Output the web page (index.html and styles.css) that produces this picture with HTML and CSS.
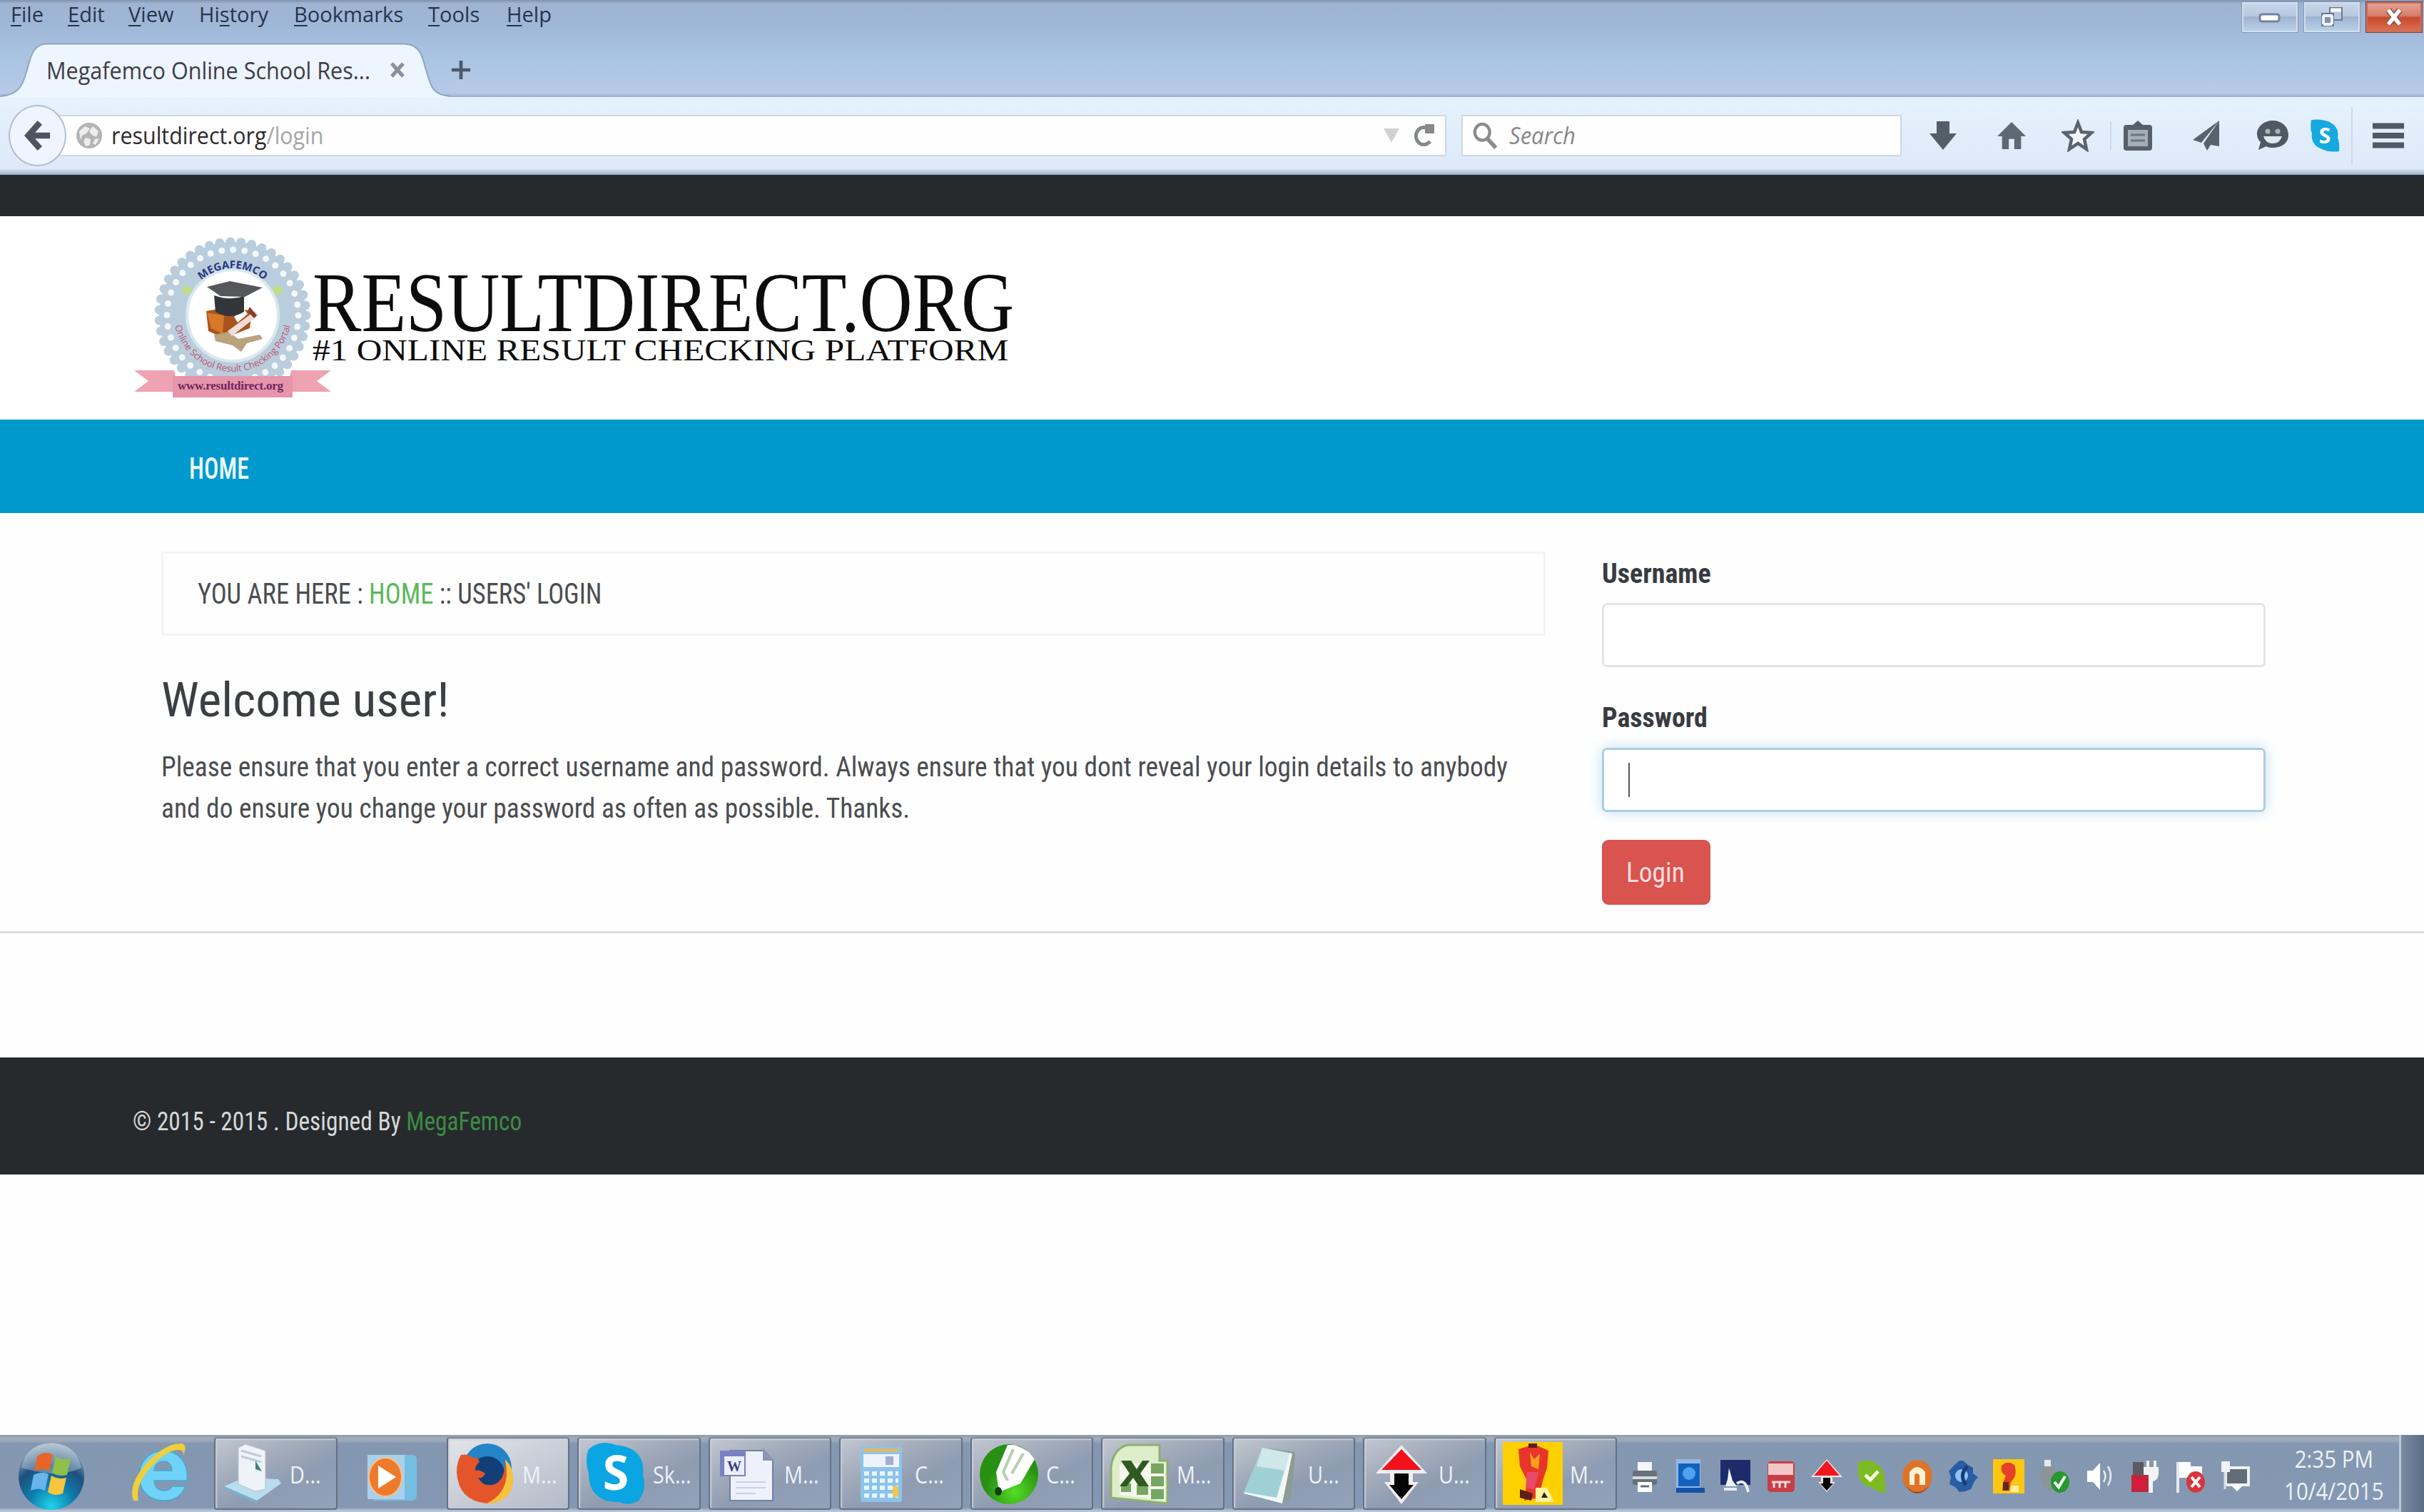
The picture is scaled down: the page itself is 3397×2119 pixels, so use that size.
FILE: index.html
```
<!DOCTYPE html>
<html lang="en">
<head>
<meta charset="utf-8">
<title>Megafemco Online School Result</title>
<link rel="stylesheet" href="styles.css">
</head>
<body>
<header class="titlebar">
  <div class="menu-row">
    <nav class="menu">
      <span><u>F</u>ile</span><span><u>E</u>dit</span><span><u>V</u>iew</span><span>Hi<u>s</u>tory</span><span><u>B</u>ookmarks</span><span><u>T</u>ools</span><span><u>H</u>elp</span>
    </nav>
    <div class="win-controls">
      <button class="win"><svg width="32" height="18" viewBox="0 0 32 18"><rect x="2" y="5" width="27" height="10" rx="3" fill="#fff" stroke="#76829a" stroke-width="3"/></svg></button>
      <button class="win"><svg width="36" height="32" viewBox="0 0 36 32"><rect x="15" y="3" width="17" height="17" fill="#b4c5de" stroke="#6b7890" stroke-width="2"/><path d="M16 6h15" stroke="#fff" stroke-width="5"/><rect x="4" y="11" width="16" height="17" fill="#8393ad" stroke="#6b7890" stroke-width="2"/><path d="M5 14h14M6 14v12M18 14v12M6 26h12" stroke="#eef4fb" stroke-width="4"/></svg></button>
      <button class="win close"><svg width="30" height="28" viewBox="0 0 30 28"><path d="M7 4l16 20M23 4L7 24" stroke="#8b5656" stroke-width="9"/><path d="M7 4l16 20M23 4L7 24" stroke="#fff" stroke-width="5.5"/></svg></button>
    </div>
  </div>
  <div class="tab-row">
    <div class="tab">
      <svg class="tab-shape" viewBox="0 0 632 76"><path d="M0 76V75C28 73 32 58 38 38C44 12 50 2 66 2H566C588 2 592 18 597 38C604 62 606 73 632 75V76Z" fill="#edf5fe"/><path d="M0 75C28 73 32 58 38 38C44 12 50 1.500 66 1.500H566C588 1.500 592 18 597 38C604 62 606 73 632 75" fill="none" stroke="#8fa5c2" stroke-width="2"/></svg>
      <span class="tab-title">Megafemco Online School Res...</span>
      <svg class="tab-close" width="24" height="24" viewBox="0 0 24 24"><path d="M4 3l16 18M20 3L4 21" stroke="#8b9099" stroke-width="5"/></svg>
    </div>
    <svg class="new-tab" width="28" height="30" viewBox="0 0 30 30"><path d="M15 1v28M1 15h28" stroke="#4c586b" stroke-width="5"/></svg>
  </div>
</header>

<div class="toolbar">
  <div class="back"><svg width="38" height="44" viewBox="0 0 40 46"><path d="M23 4L6 23l17 19M8 23h30" fill="none" stroke="#4d545e" stroke-width="9"/></svg></div>
  <div class="urlbar">
    <svg class="globe" width="38" height="38" viewBox="0 0 38 38"><circle cx="19" cy="19" r="18" fill="#b4b4b3"/><path d="M5 13l8-7 7 3-5 7-6 3-2 6zM24 6l8 7-3 8-6-3-4-5zM14 22l7 2-1 8-6 2-3-7zM27 24l6-1-5 9-4-2z" fill="#eee"/></svg>
    <span class="url"><b>resultdirect.org</b>/login</span>
    <svg class="drop" width="24" height="22" viewBox="0 0 24 22"><path d="M1 1h22L12 21z" fill="#cfd2d3"/></svg>
    <svg class="reload" width="34" height="34" viewBox="0 0 34 34"><path d="M25 9A11 12 0 1 0 26 25" fill="none" stroke="#85898d" stroke-width="5"/><path d="M19 14V1h13v13z" fill="#85898d"/></svg>
  </div>
  <div class="searchbar">
    <svg width="38" height="38" viewBox="0 0 38 40"><ellipse cx="15" cy="15" rx="11" ry="12" fill="none" stroke="#8b8b8b" stroke-width="4.500"/><path d="M22 24l13 14" stroke="#8b8b8b" stroke-width="6"/></svg>
    <span class="search-text">Search</span>
  </div>
  <div class="tools">
    <svg width="38" height="40" viewBox="0 0 38 40"><path d="M10 0h18v17h10L19 40 0 17h10z" fill="#555e68"/></svg>
    <svg width="40" height="40" viewBox="0 0 42 40"><path d="M21 0l21 21h-7v19H25V25h-8v15H7V21H0z" fill="#5e6872"/></svg>
    <svg width="46" height="46" viewBox="0 0 46 46"><path d="M23 5l5 13 14 1-10 9 3 14-12-8-12 8 3-14L4 19l14-1z" fill="#f2f7fd" stroke="#59636d" stroke-width="4.500"/></svg>
    <i class="sep"></i>
    <svg width="40" height="42" viewBox="0 0 40 42"><path d="M13 6l7-6 7 6h9q4 0 4 4v28q0 4-4 4H4q-4 0-4-4V10q0-4 4-4z" fill="#56606a"/><path d="M6 13h28v23H6z" fill="#a5adb5"/><path d="M10 20h20M10 28h20" stroke="#6c7680" stroke-width="3"/></svg>
    <svg width="38" height="42" viewBox="0 0 38 42"><path d="M37 0L0 27l12 4zM37 0L15 32l5 10 5-8 12 2z" fill="#57626c"/></svg>
    <svg width="44" height="42" viewBox="0 0 44 42"><path d="M22 0C34 0 44 8 44 20S34 38 22 38q-6 0-9-2L2 41l3-11Q0 26 0 19C0 8 10 0 22 0z" fill="#505962"/><circle cx="15" cy="15" r="3.500" fill="#aab2ba"/><circle cx="29" cy="15" r="3.500" fill="#aab2ba"/><path d="M9 22h26q-3 10-13 10T9 22z" fill="#dfe8ee"/></svg>
    <svg width="44" height="46" viewBox="0 0 44 46"><path d="M3 1q14-2 26 3 14 8 11 22 3 6 2 19-14 2-24-3Q2 36 4 20 1 14 3 1z" fill="#16a9e0"/><text x="22" y="34" text-anchor="middle" class="icon-s">S</text></svg>
    <i class="sep tall"></i>
    <svg width="44" height="36" viewBox="0 0 44 36"><path d="M0 4.500h44M0 18h44M0 31.500h44" stroke="#4d5965" stroke-width="8"/></svg>
  </div>
</div>

<div class="topbar"></div>
<div class="brand">
  <svg class="badge" width="280" height="232" viewBox="0 0 280 232">
    <defs>
      <path id="arc-top" d="M74 116A66 66 0 0 1 206 116"/>
      <path id="arc-low" d="M57 112A83 83 0 0 0 223 112"/>
    </defs>
    <circle cx="140" cy="116" r="103" fill="#b9cddd"/>
    <circle cx="140" cy="116" r="103" fill="none" stroke="#b9cddd" stroke-width="13" stroke-linecap="round" stroke-dasharray="0 15.05"/>
    <circle cx="140" cy="116" r="92" fill="none" stroke="#f2f8fc" stroke-width="9" stroke-linecap="round" stroke-dasharray="0 16.057"/>
    <circle cx="140" cy="116" r="64" fill="#fff" stroke="#d8e8ee" stroke-width="4"/>
    <text class="seal-top"><textPath href="#arc-top" startOffset="50%" text-anchor="middle">MEGAFEMCO</textPath></text>
    <text class="seal-low"><textPath href="#arc-low" startOffset="50%" text-anchor="middle">Online School Result Checking Portal</textPath></text>
    <circle cx="76" cy="81" r="6" fill="#bfe07d"/><circle cx="203" cy="81" r="6" fill="#bfe07d"/>
    <path d="M103 110l34-6 30 6-3 24-36 14-22-10z" fill="#a9541d"/>
    <path d="M104 112l24 4-2 26-16-8z" fill="#d8792a"/>
    <path d="M114 143l20-4 14 10 30-6 4 6-22 6-8 12-12-9-24-6z" fill="#b9a27c"/>
    <path d="M133 138l38-28 6 5-38 30z" fill="#f1dcd8"/><path d="M142 118l14-11 5 7-14 12z" fill="#fff"/><path d="M164 104l10 12-4 4-9-10z" fill="#82402a"/>
    <path d="M114 88q22 8 42 1v22q-20 12-40 0z" fill="#333639"/>
    <path d="M104 76l32-8 46 9-25 13-34-1z" fill="#55575b"/>
    <path d="M2 193h56v30H2l20-15zM278 193h-56v30h56l-20-15z" fill="#eea2b2"/>
    <path d="M58 193v8h-2v22l6 0z" fill="#d97990"/><path d="M222 193v8h2v22l-6 0z" fill="#d97990"/>
    <path d="M56 201h168v30H56z" fill="#e795ab"/>
    <text x="137" y="220" text-anchor="middle" textLength="148" class="ribbon">www.resultdirect.org</text>
  </svg>
  <div class="brand-text">
    <h1>RESULTDIRECT.ORG</h1>
    <p>#1 ONLINE RESULT CHECKING PLATFORM</p>
  </div>
</div>
<nav class="mainnav"><a>HOME</a></nav>

<main>
  <section class="intro">
    <div class="crumbs"><span>YOU ARE HERE : <a>HOME</a> :: USERS' LOGIN</span></div>
    <h2>Welcome user!</h2>
    <p>Please ensure that you enter a correct username and password. Always ensure that you dont reveal your login details to anybody<br>and do ensure you change your password as often as possible. Thanks.</p>
  </section>
  <form class="login">
    <label>Username</label>
    <div class="field"></div>
    <label>Password</label>
    <div class="field focus"><i></i></div>
    <button type="button"><span>Login</span></button>
  </form>
</main>
<footer><span>© 2015 - 2015 . Designed By <a>MegaFemco</a></span></footer>
<div class="blank"></div>

<div class="taskbar">
  <div class="orb"><svg width="94" height="96" viewBox="0 0 94 96" preserveAspectRatio="none">
    <defs><radialGradient id="orb" cx=".5" cy=".95" r=".95"><stop offset="0" stop-color="#22d3ee"/><stop offset=".35" stop-color="#0c7fae"/><stop offset=".65" stop-color="#1f4f7c"/><stop offset="1" stop-color="#a9bccc"/></radialGradient></defs>
    <ellipse cx="47" cy="48" rx="46" ry="47" fill="url(#orb)"/><path d="M5 36Q12 2 47 2t42 34Q68 46 47 44T5 36z" fill="#dbe6ee" opacity=".35"/>
    <path d="M27 20q12-9 22-2l-5 23q-9-6-21 0z" fill="#e8642a"/><path d="M53 20q10 6 21 3l-5 23q-12 3-21-3z" fill="#8ec04a"/><path d="M22 46q12-6 21-1l-5 23q-9-5-20 0z" fill="#69b4ea"/><path d="M47 47q10 6 21 3l-5 22q-11 5-21-2z" fill="#f9c440"/></svg></div>
  <div class="ie"><svg width="82" height="86" viewBox="0 0 82 86">
    <path d="M46 12C26 12 12 28 12 48S26 82 47 82q22 0 30-20H58q-3 6-10 6-14 0-15-14h46C82 28 66 12 46 12zM33 40q2-13 13-13t12 13z" fill="#6fd3f7" stroke="#45a6d4" stroke-width="1.500"/>
    <path d="M4 82Q-4 60 22 30 50 0 72 2q8 2 2 16 0-8-8-7Q48 12 26 38 6 62 11 82z" fill="#f0cf3a"/></svg></div>
  <div class="task"><svg width="84" height="84" viewBox="0 0 84 84"><path d="M2 60l28-12 48 2 4 6-34 24z" fill="#b9ddee"/><path d="M2 60l46 20v4L2 64z" fill="#7bb0cc"/><path d="M22 6l10-5 28 9v54l-14 3-24-10z" fill="#eef3f8" stroke="#b5c0cd"/><path d="M26 10l28 8M26 18l28 8" stroke="#c1cad6" stroke-width="3"/><path d="M46 24v12l9 3z" fill="#47817e"/></svg><span>D...</span></div>
  <div class="media"><svg width="72" height="68" viewBox="0 0 72 68"><path d="M10 2h55q6 0 6 6v50q0 8-8 8H10z" fill="#74bfe3"/><path d="M2 2h52v62H2z" fill="#a9d1e9"/><ellipse cx="27" cy="33" rx="23" ry="27" fill="#ee7a2c" stroke="#f8c08e" stroke-width="2"/><path d="M17 17v32l25-16z" fill="#fff"/></svg></div>
  <div class="task active"><svg width="84" height="88" viewBox="0 0 84 88"><circle cx="45" cy="36" r="34" fill="#2385c8"/><circle cx="45" cy="44" r="24" fill="#123f78"/><path d="M8 18q10-2 16 4 8-2 10 6-6 4-6 12 6-2 14 4-4 8-10 6 6 12 20 10 18-4 18-34 16 22 8 40Q70 86 44 86 4 82 2 42 2 28 8 18z" fill="#e5552a"/><path d="M70 24q16 16 9 42Q70 86 44 86 70 74 72 46q0-12-2-22z" fill="#f7c23c"/></svg><span>M...</span></div>
  <div class="task"><svg width="84" height="88" viewBox="0 0 84 88"><path d="M4 10Q20-4 42 4 84 8 80 46q6 20-6 36-14 8-28 2Q4 84 4 44-2 24 4 10z" fill="#0aa5e2"/><text x="42" y="67" text-anchor="middle" class="icon-s large">S</text></svg><span>Sk...</span></div>
  <div class="task"><svg width="84" height="88" viewBox="0 0 84 88"><path d="M18 12h48l12 14v56H18z" fill="#eef1fb" stroke="#7080a8" stroke-width="2"/><path d="M64 8v18h16z" fill="#8b95b5"/><path d="M26 56h42M26 64h42M26 72h28" stroke="#c7cfe6" stroke-width="2"/><rect x="4" y="12" width="36" height="36" fill="#7a80c4"/><rect x="10" y="20" width="28" height="26" fill="#eceffa"/><text x="24" y="41" text-anchor="middle" class="app-w">W</text></svg><span>M...</span></div>
  <div class="task"><svg width="84" height="88" viewBox="0 0 84 88"><rect x="18" y="6" width="58" height="78" rx="3" fill="#8dc3ea"/><path d="M22 9h50v5H22z" fill="#e3b766"/><path d="M22 17h50v18H22z" fill="#edf2fc"/><path d="M53 20h11v12H53z" fill="#a4acd5"/><g stroke="#e7f5fc" stroke-width="6" stroke-dasharray="7 4"><path d="M23 44h48M23 54h48M23 64h48M23 75h48"/></g><rect x="63" y="62" width="8" height="15" fill="#f0c84c"/></svg><span>C...</span></div>
  <div class="task"><svg width="84" height="88" viewBox="0 0 84 88"><defs><radialGradient id="cg" cx=".6" cy=".8"><stop offset="0" stop-color="#56dd25"/><stop offset="1" stop-color="#279012"/></radialGradient></defs><ellipse cx="42" cy="45" rx="41" ry="42" fill="url(#cg)"/><path d="M24 42L40 4h10l10 4 10 6 8 10-20 34-30 12z" fill="#fff"/><path d="M48 10L34 42l6 12M62 16L46 44" stroke="#b7cfad" stroke-width="4" fill="none"/><ellipse cx="27" cy="69" rx="5" ry="6" fill="#123f0e"/></svg><span>C...</span></div>
  <div class="task"><svg width="84" height="88" viewBox="0 0 84 88"><path d="M2 78V34Q6 8 26 4h44v22h11v60z" fill="#dcedc8" stroke="#8fae70" stroke-width="3"/><path d="M14 30h64v52L14 74z" fill="#f4f9ec"/><path d="M58 30h18v14H58zM58 48h18v14H58zM58 66h18v14H58zM38 60h16v14H38zM16 58h14v12H16z" fill="#77a662"/><path d="M16 26h14l8 12 8-12h10L43 44l12 18H41l-8-12-9 12H14l14-18z" fill="#2f5b22"/></svg><span>M...</span></div>
  <div class="task"><svg width="84" height="88" viewBox="0 0 84 88"><path d="M32 8l44 6-6 66-14 6z" fill="#8d9b94"/><path d="M30 8l42 8-14 70L4 72z" fill="#f1f8f7"/><path d="M30 8l38 8-18 62L4 70z" fill="#9fd0d6"/><path d="M30 8l38 8-6 24-40-6z" fill="#cfe7ea"/></svg><span>U...</span></div>
  <div class="task"><svg width="84" height="88" viewBox="0 0 84 88"><path d="M42 4l36 40H58v12h8L42 87 18 56h8V44H6z" fill="#f1edf0"/><path d="M42 10l28 29H14z" fill="#f3111b"/><path d="M32 44h20v16h7L42 80 25 60h7z" fill="#050505"/></svg><span>U...</span></div>
  <div class="task"><svg width="84" height="88" viewBox="0 0 84 88"><rect width="84" height="88" fill="#fdd000"/><path d="M22 10l16-5 10 0 16 7-2 24-6 18-6 24-20 4 4-28-10-20z" fill="#e8352c"/><path d="M38 14l6 10 8-8-2 22-10-4z" fill="#fba01b"/><path d="M34 42l16 0-6 24-12-2z" fill="#e84b6a"/><path d="M36 2h12v6H36zM24 66l18 6-2 10-16-4z" fill="#5b1f16"/><path d="M46 64h16l10 20H46z" fill="#fff2a0"/><path d="M54 78l4-8 5 8z" fill="#222"/></svg><span>M...</span></div>
  <div class="tray">
    <svg viewBox="0 0 44 48"><rect x="12" y="4" width="20" height="16" fill="#f4f6f8"/><rect x="5" y="16" width="34" height="20" rx="3" fill="#69707a"/><path d="M5 26h34" stroke="#d6dade" stroke-width="4"/><rect x="12" y="32" width="20" height="14" fill="#fff"/><path d="M16 38h12" stroke="#66707a" stroke-width="3"/></svg>
    <svg viewBox="0 0 44 48"><path d="M2 0h34v42H2z" fill="#94b8e4"/><path d="M5 6h30v32H5z" fill="#1162bd"/><circle cx="20" cy="20" r="9" fill="#4fa2ee"/><path d="M2 40h40v7H2z" fill="#1452a8"/></svg>
    <svg viewBox="0 0 44 48"><path d="M1 1h42v35H1z" fill="#1c2c6b"/><path d="M13 12l5 18 6 8H8l3-10z" fill="#f0f2fb"/><path d="M6 42h18M24 34q12-8 16 12" stroke="#e8ebf5" stroke-width="4" fill="none"/></svg>
    <svg viewBox="0 0 44 48"><rect x="3" y="3" width="38" height="43" rx="5" fill="#c93d46"/><path d="M4 6h35v16H4z" fill="#f3c7c6"/><path d="M9 32h26M12 32v8M20 32v8M28 32v8" stroke="#f5d9d7" stroke-width="3"/></svg>
    <svg viewBox="0 0 44 48"><path d="M22 0l22 25H30v7h4L22 46 10 32h4v-7H0z" fill="#f1e4e6"/><path d="M22 2l18 21H4z" fill="#ef1720"/><path d="M17 26h10v8h4l-9 10-9-10h4z"/></svg>
    <svg viewBox="0 0 44 48"><path d="M3 4q18-6 28 4 10 8 9 22l2 17q-12-1-20-7Q2 34 3 18z" fill="#7dba22"/><path d="M13 22l7 7 11-12" stroke="#f2fbdf" stroke-width="5" fill="none"/></svg>
    <svg viewBox="0 0 44 48"><ellipse cx="22" cy="24" rx="21" ry="23" fill="#dd742a"/><path d="M11 36V18q11-14 22 0v18h-8V22q-4-4-7 0v14z" fill="#fff0cf"/><path d="M5 37q17 18 34 0-8 11-17 11T5 37z" fill="#a43b13"/></svg>
    <svg viewBox="0 0 44 48"><path d="M22 2l7 6 7 4v8l7 5-5 6-5 11-8 3-8 1-6-7-8-4 2-10-3-8 7-8 8-7z" fill="#285da5"/><circle cx="20" cy="23" r="9" fill="#8cc4ef"/><path d="M28 10q-12 12-2 26" stroke="#163d78" stroke-width="5" fill="none"/></svg>
    <svg viewBox="0 0 44 48"><rect width="44" height="48" fill="#fdc711"/><path d="M12 9Q20 1 30 8q5 14-5 24l-2 12H13l1-11 4-10Q10 20 12 9z" fill="#e6402a"/><path d="M14 32h8v12h-8z" fill="#5e2c15"/><path d="M25 37h11v9H25z" fill="#fff0a0"/></svg>
    <svg viewBox="0 0 44 48"><path d="M9 1h9v10H9z" fill="#e6e8ea"/><path d="M3 10h18l10 14v20H14q-11-8-11-20z" fill="#8c9499"/><ellipse cx="31" cy="32" rx="13" ry="15" fill="#26982f"/><path d="M23 32l6 7 9-15" stroke="#fff" stroke-width="4" fill="none"/></svg>
    <svg viewBox="0 0 44 48"><path d="M5 16h8L23 5v38L13 32H5z" fill="#fff"/><path d="M28 16q5 8 0 16M34 10q8 13 0 27" stroke="#e5eaf2" stroke-width="2.500" fill="none"/></svg>
    <svg viewBox="0 0 44 48"><path d="M5 4h15v20H5z" fill="#5b5b62"/><path d="M26 2v10M36 2v10" stroke="#eee" stroke-width="4"/><path d="M20 11h21v10q-1 9-8 10v16h-6V31q-7-2-7-10z" fill="#f3f3f3"/><path d="M3 22h24v24H3z" fill="#b92b3b"/><path d="M6 26l16 16M22 26L6 42" stroke="#df173c" stroke-width="6"/></svg>
    <svg viewBox="0 0 44 48"><path d="M5 4v43" stroke="#e6e8ed" stroke-width="4"/><path d="M7 4h16v6h16v21H20v-5H7z" fill="#fff"/><ellipse cx="30" cy="32" rx="13" ry="15" fill="#d9363c"/><path d="M24 25l12 14M36 25L24 39" stroke="#fff" stroke-width="4"/></svg>
    <svg viewBox="0 0 44 48"><rect x="8" y="12" width="32" height="24" fill="#636d79" stroke="#f0f2f4" stroke-width="4"/><path d="M17 38h14l-7 7z" fill="#fff"/><path d="M2 3h12v15H2z" fill="#f0f2f4"/><path d="M7 18v24" stroke="#d9dde2" stroke-width="3"/></svg>
  </div>
  <div class="clock"><span>2:35 PM</span><span>10/4/2015</span></div>
  <div class="peek"></div>
</div>
</body>
</html>
```
FILE: styles.css
```
* { box-sizing: border-box; }
body {
  margin: 0;
  width: 3397px;
  height: 2119px;
  display: flex;
  flex-direction: column;
  overflow: hidden;
  background: #fefefe;
  font-family: "Roboto Condensed", Roboto, sans-serif;
}
svg { display: block; flex: none; }
h1, h2, p { margin: 0; font-weight: 400; }

/* Window frame */
.titlebar {
  height: 136px;
  flex: none;
  display: flex;
  flex-direction: column;
  background: linear-gradient(#7f93ad 0, #9fb4d2 5px, #9fb6d7 30px, #a9c4e1 80px, #b6cae7 130px, #9db0cc 136px);
  font-family: "Open Sans", "Noto Sans", sans-serif;
}
.menu-row { height: 60px; display: flex; justify-content: space-between; }
.menu {
  display: grid;
  grid-template-columns: 80px 85px 99px 133px 188px 110px 90px;
  padding-left: 15px;
  height: 40px;
  align-items: center;
  font-size: 30px;
  line-height: 40px;
  color: #26344d;
}
.menu span { transform: scaleX(.97); transform-origin: left; }
.menu u { text-decoration-thickness: 2px; text-underline-offset: 4px; }
.win-controls { display: flex; gap: 9px; padding: 3px 3px 0 0; height: 45px; }
.win {
  width: 78px;
  padding: 0;
  border: 2px solid #d3dfee;
  outline: 1px solid #8799b4;
  background: linear-gradient(#c8d5e8 0, #b7c9e0 45%, #9fb4d1 50%, #b9cfe8 100%);
  display: flex;
  align-items: center;
  justify-content: center;
}
.win.close {
  border-color: #c9705f;
  outline-color: #7d3d3d;
  background: linear-gradient(#e5a090 0, #d77d69 45%, #c84a2c 52%, #dc6d50 100%);
}
.tab-row { height: 76px; display: flex; align-items: center; }
.tab { position: relative; width: 632px; height: 76px; display: flex; align-items: center; padding-left: 65px; }
.tab-shape { position: absolute; left: 0; top: 0; width: 632px; height: 76px; }
.tab-title {
  position: relative;
  width: 480px;
  font-size: 32px;
  white-space: nowrap;
  color: #3e3c45;
  transform: scaleX(.955);
  transform-origin: left;
}
.tab-close { position: relative; }

/* Navigation toolbar */
.toolbar {
  height: 109px;
  flex: none;
  display: flex;
  align-items: center;
  padding: 0 0 2px 12px;
  background: linear-gradient(#e6f2fe 0, #e4effc 30px, #dde9f8 100px, #9fb0c4 109px);
  font-family: "Open Sans", "Noto Sans", sans-serif;
  font-size: 32px;
}
.back {
  width: 81px;
  height: 86px;
  position: relative;
  z-index: 1;
  border-radius: 50%;
  border: 2px solid #b3bdcc;
  background: #f0f5fd;
  display: flex;
  align-items: center;
  justify-content: center;
}
.urlbar, .searchbar {
  height: 58px;
  background: #fefefe;
  border: 2px solid #cfd7e0;
  display: flex;
  align-items: center;
}
.urlbar { width: 1947px; margin-left: -13px; padding-left: 24px; }
.url { margin-left: 12px; white-space: nowrap; color: #a3a5a8; transform: scaleX(.95); transform-origin: left; }
.url b { font-weight: 400; color: #2c2c2e; }
.drop { margin-left: auto; }
.reload { margin: 0 13px 0 16px; }
.searchbar { width: 617px; margin-left: 21px; padding-left: 12px; }
.search-text { margin-left: 15px; font-style: italic; color: #85878b; transform: scaleX(.97); transform-origin: left; }
.tools {
  flex: 1;
  display: grid;
  grid-template-columns: 96px 96px 90px 1px 76px 115px 72px 74px 1px auto;
  align-items: center;
  justify-items: center;
  padding-left: 10px;
}
.sep { width: 2px; height: 40px; background: #cfd9e5; }
.sep.tall { height: 80px; }
.icon-s { font: 700 30px "Open Sans", sans-serif; fill: #fff; }
.icon-s.large { font-size: 66px; }
.app-w { font: 700 20px "Liberation Serif", serif; fill: #3a3f86; }

/* Page header */
.topbar { height: 58px; flex: none; background: #262a2d; border-top: 4px solid #222c37; }
.brand { height: 285px; flex: none; display: flex; padding: 23px 0 0 186px; background: #fff; }
.brand-text { margin-left: -28px; padding-top: 46px; font-family: "Liberation Serif", serif; color: #0c0c0c; white-space: nowrap; }
.brand-text h1 { font-size: 119px; line-height: 104px; transform: scaleX(.862); transform-origin: left; }
.brand-text p { font-size: 42px; line-height: 40px; margin-top: -5px; transform: scaleX(1.174); transform-origin: left; }
.seal-top { font: 700 15px "Open Sans", sans-serif; fill: #29377f; }
.seal-low { font: 13px "Open Sans", sans-serif; fill: #c0566c; }
.ribbon { font: 700 17px "Liberation Serif", serif; fill: #6c2560; }
.mainnav { height: 131px; flex: none; background: #0099ce; padding: 5px 0 0 265px; display: flex; align-items: center; }
.mainnav a { font-size: 43px; font-weight: 500; color: #e9f8fd; transform: scaleX(.79); transform-origin: left; }

/* Content */
main {
  height: 589px;
  flex: none;
  display: grid;
  grid-template-columns: 1940px 930px;
  column-gap: 79px;
  padding-left: 226px;
  border-bottom: 3px solid #dcdcdc;
}
.intro { padding-top: 54px; color: #4b4d50; white-space: nowrap; }
.crumbs { height: 118px; border: 3px solid #f3f4f6; padding-left: 48px; display: flex; align-items: center; font-size: 40px; }
.crumbs span { transform: scaleX(.913); transform-origin: left; }
.crumbs a { color: #5cb85c; }
.intro h2 { margin-top: 48px; font-size: 67px; line-height: 84px; color: #3b3f44; transform: scaleX(1.035); transform-origin: left; }
.intro p { margin-top: 23px; font-size: 39px; line-height: 58px; transform: scaleX(.958); transform-origin: left; }
.login { padding-top: 62px; display: flex; flex-direction: column; align-items: flex-start; }
.login label { font-size: 38px; font-weight: 700; line-height: 46px; color: #383b41; }
.field { width: 930px; height: 90px; margin: 18px 0 48px; border: 3px solid #e4e4e4; border-radius: 7px; background: #fff; padding-left: 34px; display: flex; align-items: center; }
.field.focus { margin: 19px 0 39px; border-color: #a9cee6; box-shadow: 0 0 20px #c5dff3; }
.field i { width: 2px; height: 48px; background: #55585c; }
.login button { width: 152px; height: 91px; padding: 0 0 0 34px; border: 0; border-radius: 9px; background: #d9534f; color: #fbdedd; font: 38px "Roboto Condensed", sans-serif; text-align: left; }
.login button span { display: inline-block; transform: scaleX(.985); transform-origin: left; }

footer { height: 164px; margin-top: 174px; flex: none; background: #262a2d; padding: 15px 0 0 186px; display: flex; align-items: center; font-size: 36px; color: #d6d8d9; }
footer span { transform: scaleX(.927); transform-origin: left; }
footer a { color: #3d8b45; }
.blank { flex: 1; }

/* Desktop taskbar */
.taskbar {
  height: 108px;
  flex: none;
  display: flex;
  align-items: stretch;
  background: linear-gradient(#8c97a6 0, #a0abba 4px, #9aa7b8 9px, #8497b1 12px, #8598b3 102px, #b7c5d6 106px);
  font-family: "Open Sans", "Noto Sans", sans-serif;
  font-size: 32px;
  color: #eef2f7;
}
.orb { width: 183px; padding: 10px 0 0 25px; }
.ie { width: 117px; padding: 10px 0 0 0; }
.media { width: 153px; padding: 26px 0 0 40px; }
.task {
  width: 172.500px;
  margin: 3px 11px 3px 0;
  padding-left: 10px;
  display: flex;
  align-items: center;
  border: 2px solid #657083;
  border-top-color: #7b8594;
  border-radius: 4px;
  box-shadow: inset 2px 2px 2px #c7ced8;
  background: linear-gradient(155deg, #c3c8d1 0, #a2abba 35%, #8e9cb2 60%, #92a2b8 100%);
}
.task:nth-child(3) { margin-right: 0; }
.task.active { background: linear-gradient(155deg, #e3e5e9 0, #c9ced7 50%, #b2bcc9 100%); }
.task span { margin: 2px 0 0 10px; transform: scaleX(.9); transform-origin: left; white-space: nowrap; }
.tray { width: 890px; margin-left: 6px; padding-top: 33px; display: flex; gap: 19.700px; }
.tray svg { width: 44px; height: 50px; }
.clock { width: 152px; margin-left: 22px; padding-top: 11px; display: flex; flex-direction: column; align-items: center; line-height: 45px; }
.clock span { transform: scaleX(.92); }
.peek { width: 35px; margin-left: auto; border-left: 3px solid #bcc7d5; background: linear-gradient(90deg, #7b8ca4, #5a6c83); }
```
